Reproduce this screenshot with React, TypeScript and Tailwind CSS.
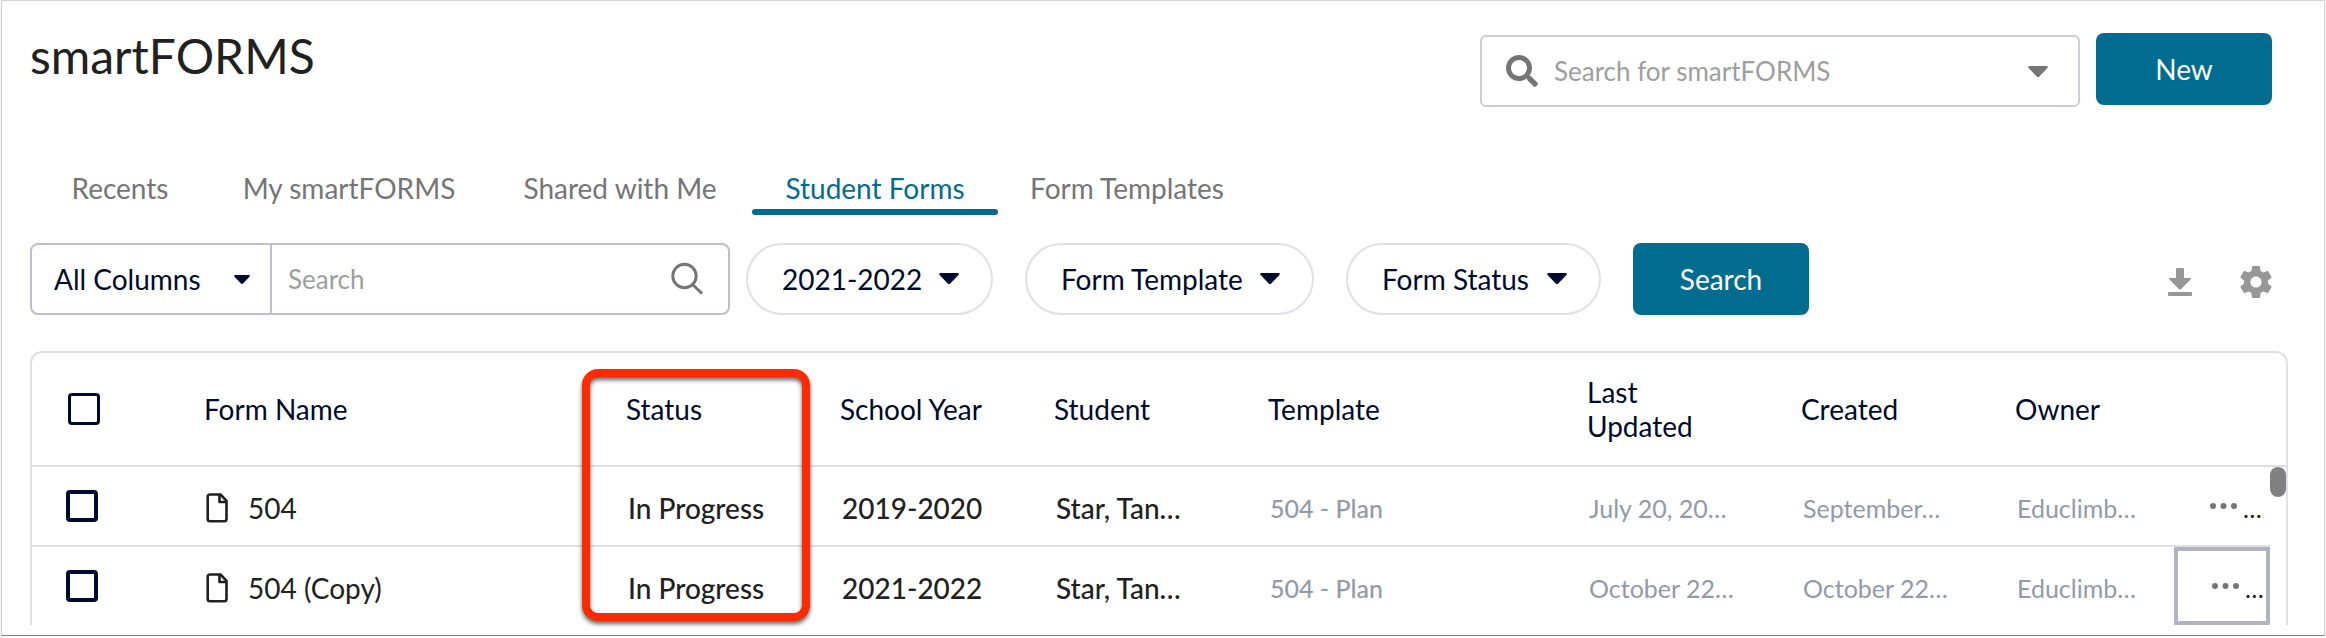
import React from 'react';
import { FaSearch } from 'react-icons/fa';

interface FormRow {
  name: string;
  status: string;
  year: string;
  student: string;
  template: string;
  updated: string;
  created: string;
  owner: string;
  focused?: boolean;
}

const TABS: { label: string; width: string; active?: boolean }[] = [
  { label: 'Recents', width: 'w-[180px]' },
  { label: 'My smartFORMS', width: 'w-[278px]' },
  { label: 'Shared with Me', width: 'w-[264px]' },
  { label: 'Student Forms', width: 'w-[246px]', active: true },
  { label: 'Form Templates', width: 'w-[258px]' },
];

const FILTERS: { label: string; value: string; width: string }[] = [
  { label: 'School year', value: '2021-2022', width: 'w-[247px]' },
  { label: 'Form template', value: 'Form Template', width: 'w-[289px]' },
  { label: 'Form status', value: 'Form Status', width: 'w-[255px]' },
];

const ROWS: FormRow[] = [
  { name: '504', status: 'In Progress', year: '2019-2020', student: 'Star, Tan…', template: '504 - Plan', updated: 'July 20, 20…', created: 'September…', owner: 'Educlimb…' },
  { name: '504 (Copy)', status: 'In Progress', year: '2021-2022', student: 'Star, Tan…', template: '504 - Plan', updated: 'October 22…', created: 'October 22…', owner: 'Educlimb…', focused: true },
];

const HEADERS: { label: string; wrap?: boolean }[] = [
  { label: 'Form Name' },
  { label: 'Status' },
  { label: 'School Year' },
  { label: 'Student' },
  { label: 'Template' },
  { label: 'Last Updated', wrap: true },
  { label: 'Created' },
  { label: 'Owner' },
];

const Caret: React.FC<{ className?: string }> = ({ className = 'h-[11px] w-5' }) => (
  <svg viewBox="0 0 20 11" className={className} fill="currentColor" aria-hidden="true">
    <path d="M1.5 0h17c1.2 0 1.7 1.1.9 2l-8.1 8.4c-.7.8-1.9.8-2.6 0L.6 2C-.2 1.1.3 0 1.5 0z" />
  </svg>
);

const FileIcon = () => (
  <svg viewBox="0 0 22 30" className="h-[30px] w-[22px] shrink-0" fill="none" stroke="currentColor" strokeWidth="2.6" strokeLinejoin="round" aria-hidden="true">
    <path d="M4 1.5h10.5l6 6.300V26a2.300 2.300 0 0 1-2.300 2.300H4A2.300 2.300 0 0 1 1.700 26V3.800A2.300 2.300 0 0 1 4 1.500z" />
    <path d="M13.500 1.500V9h7" />
  </svg>
);

const SearchIcon = () => (
  <svg viewBox="0 0 34 34" className="h-[34px] w-[34px] shrink-0" fill="none" stroke="currentColor" strokeWidth="3" aria-hidden="true">
    <circle cx="14.5" cy="14" r="11.7" />
    <path d="M22.500 22.500l9.500 9" />
  </svg>
);

const DownloadIcon = () => (
  <svg viewBox="0 0 24 28" className="h-7 w-6" fill="currentColor" aria-hidden="true">
    <path d="M9 0h6a1 1 0 0 1 1 1v9h6c.9 0 1.200.9.600 1.500L12.900 21.300c-.5.500-1.300.5-1.800 0L1.400 11.500C.8 10.900 1.100 10 2 10h6V1a1 1 0 0 1 1-1z" />
    <rect y="24" width="24" height="4" rx="1" />
  </svg>
);

const GearIcon = () => (
  <svg viewBox="2 2 20 20" className="h-8 w-8" fill="currentColor" aria-hidden="true">
    <path d="M19.430 12.980c.04-.32.07-.64.07-.98s-.03-.66-.07-.98l2.110-1.650c.19-.15.24-.42.12-.64l-2-3.460c-.12-.22-.39-.3-.61-.22l-2.490 1c-.52-.4-1.080-.73-1.690-.98l-.38-2.650C14.460 2.180 14.250 2 14 2h-4c-.25 0-.46.18-.49.42l-.38 2.650c-.61.25-1.170.59-1.690.98l-2.490-1c-.23-.09-.49 0-.61.22l-2 3.460c-.13.22-.07.49.12.64l2.110 1.650c-.04.32-.07.65-.07.98s.03.66.07.98l-2.110 1.650c-.19.15-.24.42-.12.64l2 3.460c.12.22.39.3.61.22l2.490-1c.52.4 1.080.73 1.690.98l.38 2.650c.03.24.24.42.49.42h4c.25 0 .46-.18.49-.42l.38-2.650c.61-.25 1.170-.59 1.690-.98l2.490 1c.23.09.49 0 .61-.22l2-3.460c.12-.22.07-.49-.12-.64l-2.110-1.650zM12 15.500c-1.930 0-3.500-1.570-3.500-3.500s1.570-3.500 3.500-3.500 3.500 1.570 3.500 3.500-1.570 3.500-3.500 3.500z" />
  </svg>
);

const DotsIcon = () => (
  <svg viewBox="0 0 27 6" className="h-1.5 w-[27px]" fill="currentColor" aria-hidden="true">
    <circle cx="3" cy="3" r="3" />
    <circle cx="13.500" cy="3" r="3" />
    <circle cx="24" cy="3" r="3" />
  </svg>
);

const App: React.FC = () => (
  <div className="mx-px border border-[#d0d0d0] border-b-[#808482] bg-white pl-7 pr-9 pb-[10px] font-[Lato,sans-serif] text-[28px] leading-[34px] text-[#000a2d] shadow-[0_1px_1px_#c4c6c5]">
    {/* Page header */}
    <header className="flex items-start justify-between pt-8 pr-4">
      <h1 className="text-[48px] leading-[46px] text-[#212121]">smartFORMS</h1>
      <div className="flex items-start gap-4">
        <div className="mt-0.5 flex h-[72px] w-[600px] items-center rounded-md border-2 border-[#cccdd8] px-6 text-[#757575]">
          <FaSearch className="h-8 w-8 shrink-0" />
          <input aria-label="Search for smartFORMS" placeholder="Search for smartFORMS" className="ml-4 min-w-0 flex-1 text-[26px] outline-none placeholder:text-[#9e9e9e]" />
          <button aria-label="Search options" className="px-1.5"><Caret /></button>
        </div>
        <button className="h-[72px] w-[176px] rounded-lg bg-[#006c90] text-white">New</button>
      </div>
    </header>

    {/* Tabs */}
    <nav className="mt-16 flex">
      {TABS.map(tab => (
        <a key={tab.label} href="#" className={`flex h-11 flex-col justify-between text-center ${tab.width} ${tab.active ? 'text-[#006c90]' : 'text-[#757575]'}`}>
          {tab.label}
          {tab.active && <span className="h-1.5 rounded-full bg-[#006c90]" />}
        </a>
      ))}
    </nav>

    {/* Filters */}
    <div className="mt-7 flex items-center pr-4">
      <div className="flex h-[72px] w-[700px] rounded-lg border-2 border-[#bdbfcf]">
        <div className="relative w-[240px] border-r-2 border-[#bdbfcf]">
          <select aria-label="Search column" className="h-full w-full appearance-none pl-[22px] outline-none">
            <option>All Columns</option>
          </select>
          <Caret className="pointer-events-none absolute top-[30px] right-5 h-[9px] w-4" />
        </div>
        <label className="flex flex-1 items-center pl-4 pr-6 text-[#757575]">
          <input aria-label="Search" placeholder="Search" className="min-w-0 flex-1 text-[26px] outline-none placeholder:text-[#9e9e9e]" />
          <SearchIcon />
        </label>
      </div>
      <div className="ml-4 flex gap-8">
        {FILTERS.map(({ label, value, width }) => (
          <div key={label} className={`relative h-[72px] rounded-full border-2 border-[#e0e0e6] ${width}`}>
            <select aria-label={label} className="h-full w-full appearance-none rounded-full pl-[34px] outline-none">
              <option>{value}</option>
            </select>
            <Caret className="pointer-events-none absolute top-7 right-8 h-[11px] w-5" />
          </div>
        ))}
        <button className="h-[72px] w-[176px] rounded-lg bg-[#006c90] text-white">Search</button>
      </div>
      <div className="ml-auto flex items-center gap-12 pt-1.5 text-[#979797]">
        <button aria-label="Download"><DownloadIcon /></button>
        <button aria-label="Settings"><GearIcon /></button>
      </div>
    </div>

    {/* Forms table */}
    <div className="relative mt-9 rounded-t-xl border-2 border-b-0 border-[#e0e0e6]">
      <table className="w-full table-fixed border-separate border-spacing-0 text-left whitespace-nowrap">
        <colgroup>
          <col className="w-[154px]" />
          <col className="w-[422px]" />
          <col className="w-[214px]" />
          <col className="w-[214px]" />
          <col className="w-[214px]" />
          <col />
          <col className="w-[214px]" />
          <col className="w-[214px]" />
          <col className="w-[177px]" />
          <col className="w-24" />
          <col className="w-4" />
        </colgroup>
        <thead>
          <tr className="[&>th]:h-[114px] [&>th]:border-b-2 [&>th]:border-[#e0e0e4] [&>th]:font-normal">
            <th className="pl-9">
              <input type="checkbox" aria-label="Select all forms" className="block h-8 w-8 appearance-none rounded-[4px] border-[3px] border-[#000a2d]" />
            </th>
            {HEADERS.map(({ label, wrap }) => (
              <th key={label} className={wrap ? 'pr-16 pl-[18px] whitespace-normal' : 'pl-[18px]'}>{label}</th>
            ))}
            <th />
            <th />
          </tr>
        </thead>
        <tbody>
          {ROWS.map(row => (
            <tr
              key={row.name}
              className={row.focused ? '[&>td]:h-[78px]' : '[&>td]:h-20 [&>td]:border-b-2 [&>td]:border-[#e0e0e4] [&>td:last-child]:border-b-0'}
            >
              <td className="pl-[34px]">
                <input type="checkbox" aria-label={`Select ${row.name}`} className="block h-8 w-8 appearance-none rounded-[4px] border-4 border-[#000a2d]" />
              </td>
              <td className="pt-[3px] pl-5 text-[#212121]">
                <div className="flex items-center gap-5"><FileIcon />{row.name}</div>
              </td>
              <td className="pt-[3px] pl-5 font-medium text-[#212121]">{row.status}</td>
              <td className="pt-[3px] pl-5 font-medium text-[#212121]">{row.year}</td>
              <td className="pt-[3px] pl-5 font-medium text-[#212121]">{row.student}</td>
              <td className="pt-[3px] pl-5 text-[25px] font-medium text-[#9499aa]">{row.template}</td>
              <td className="pt-[3px] pl-5 text-[25px] text-[#9499aa]">{row.updated}</td>
              <td className="pt-[3px] pl-5 text-[25px] text-[#9499aa]">{row.created}</td>
              <td className="pt-[3px] pl-5 text-[25px] text-[#9499aa]">{row.owner}</td>
              <td className={row.focused ? 'border-4 border-[#b1b4c0] pl-[34px]' : 'pl-9'}>
                <div className="flex items-center gap-1.5">
                  <button aria-label={`Actions for ${row.name}`} className="text-[#757575]"><DotsIcon /></button>
                  <span className="pt-1 text-[25px] text-[#212121]">…</span>
                </div>
              </td>
              <td className="align-top">
                {!row.focused && <div className="h-[30px] w-4 rounded-full bg-[#808080]" />}
              </td>
            </tr>
          ))}
        </tbody>
      </table>

      {/* Highlight around the status column */}
      <div className="pointer-events-none absolute top-4 left-[550px] h-[252px] w-[228px] rounded-2xl border-8 border-[#ff2b00] drop-shadow-[0_3px_2px_rgba(0,0,0,0.6)]" />
    </div>
  </div>
);

export default App;
